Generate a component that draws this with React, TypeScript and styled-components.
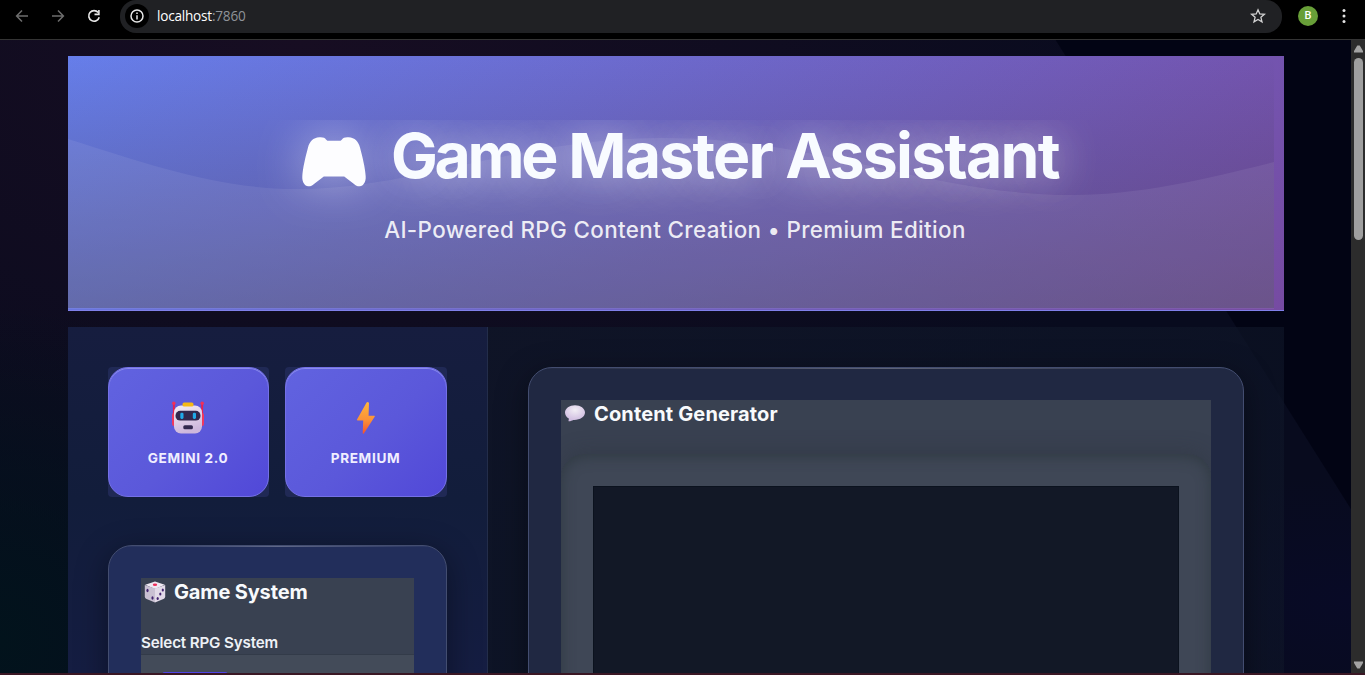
import React from "react";
import styled, { createGlobalStyle } from "styled-components";

const Global = createGlobalStyle`
  * { box-sizing: border-box; }
  html, body { margin: 0; padding: 0; background: #000; overflow: hidden; }
  body { font-family: Inter, "Liberation Sans", sans-serif; color: #f8fafc; }
  h1, h2, p { margin: 0; }
  svg { display: block; flex: none; }
`;

const Window = styled.div`
  width: 1365px;
  height: 675px;
  display: flex;
  flex-direction: column;
  overflow: hidden;
  border-bottom: 2px solid #3b1724;
`;

const Toolbar = styled.div`
  flex: none;
  height: 40px;
  display: flex;
  align-items: flex-start;
  background: #000;
  border-bottom: 1px solid #343434;
`;

const NavButtons = styled.div`
  width: 120px;
  height: 32px;
  padding-left: 14px;
  display: flex;
  align-items: center;
  gap: 20px;
`;

const AddressBar = styled.div`
  width: 1162px;
  height: 33px;
  padding: 0 16px 1px 5px;
  display: flex;
  align-items: center;
  background: #202124;
  border-radius: 16px;
`;

const InfoDot = styled.div`
  width: 24px;
  height: 24px;
  border-radius: 50%;
  background: #000;
  display: flex;
  align-items: center;
  justify-content: center;
`;

const Url = styled.div`
  flex: 1;
  margin-left: 8px;
  font: 13.6px/18px "Open Sans", "Noto Sans", sans-serif;
  letter-spacing: -0.22px;
  color: #fff;
  span { color: #8f9398; }
`;

const Avatar = styled.div`
  margin: 6px 0 0 16px;
  width: 20px;
  height: 20px;
  border-radius: 50%;
  background: #689f38;
  font: 500 11px/20px Roboto, sans-serif;
  text-align: center;
  color: #fff;
`;

const Kebab = styled.div`
  height: 32px;
  margin-left: 16px;
  width: 20px;
  display: flex;
  align-items: center;
  justify-content: center;
`;

const Viewport = styled.div`
  flex: 1;
  min-height: 0;
  display: flex;
`;

const Page = styled.main`
  width: 1351px;
  overflow: hidden;
  padding: 16px 67px 0 68px;
  display: flex;
  flex-direction: column;
  gap: 16px;
  background:
    linear-gradient(57.8deg, transparent 1230px, #020414 1231px),
    radial-gradient(circle at 0% 95%, #02131c 0, rgba(2, 19, 28, 0) 340px),
    radial-gradient(ellipse at 1351px 560px, #080a26 0, rgba(8, 10, 38, 0) 300px),
    radial-gradient(ellipse at 300px 0, #170d22 0, rgba(23, 13, 34, 0) 900px),
    #080b1e;
`;

const Scrollbar = styled.div`
  width: 14px;
  padding: 5px 2px 4px 3px;
  display: flex;
  flex-direction: column;
  justify-content: space-between;
  background: #2c2c2c;
`;

const ScrollTop = styled.div`
  display: flex;
  flex-direction: column;
  gap: 5px;
`;

const Thumb = styled.div`
  height: 182px;
  width: 9px;
  border-radius: 5px;
  background: #9f9f9f;
`;

const Hero = styled.header`
  position: relative;
  flex: none;
  height: 255px;
  padding-top: 64px;
  display: flex;
  flex-direction: column;
  align-items: center;
  background: linear-gradient(135deg, #667eea 0%, #764ba2 100%);
  border-bottom: 1px solid #8080ea;
`;

const HeroShade = styled.div`
  position: absolute;
  inset: 0 10px 2px 0;
  background: linear-gradient(180deg, rgba(65, 65, 85, 0) 0%, rgba(65, 65, 85, 0.42) 100%);
`;

const TitleRow = styled.div`
  position: relative;
  width: 960px;
  height: 90px;
  clip-path: inset(0 -80px -80px -80px);
`;

const Title = styled.h1`
  display: flex;
  align-items: flex-start;
  padding-left: 106px;
  font: 700 62.5px/70px Inter, sans-serif;
  letter-spacing: -1.75px;
  white-space: nowrap;
  color: #f8fbff;
  text-shadow: 0 0 40px rgba(255, 255, 255, 0.5), 0 4px 50px rgba(255, 255, 255, 0.2);
  svg {
    margin: 17px 25px 0 0;
    filter: drop-shadow(0 0 24px rgba(255, 255, 255, 0.5));
  }
`;

const TightWord = styled.span`
  letter-spacing: -3.3px;
`;

const Subtitle = styled.p`
  position: relative;
  left: -1px;
  margin-top: 4px;
  font-size: 22.4px;
  font-weight: 500;
  line-height: 32px;
  letter-spacing: 0.37px;
  white-space: nowrap;
  color: rgba(255, 255, 255, 0.88);
`;

const Columns = styled.div`
  flex: 1;
  min-height: 0;
  display: grid;
  grid-template-columns: 420px 1fr;
`;

const Sidebar = styled.aside`
  min-height: 0;
  padding: 40px;
  display: flex;
  flex-direction: column;
  gap: 48px;
  background: linear-gradient(180deg, #161d3f 0%, #121d3b 50%, #151d42 100%);
  border-right: 1px solid #232d4a;
`;

const MainPanel = styled.section`
  min-height: 0;
  padding: 40px;
  background: linear-gradient(90deg, rgba(15, 22, 40, 0.8), rgba(15, 22, 40, 0.65));
`;

const Badges = styled.div`
  display: grid;
  grid-template-columns: 161px 1fr;
  gap: 16px;
`;

const BadgeFrame = styled.div`
  height: 130px;
  border-radius: 4px;
  background: #202955;
`;

const Badge = styled.div`
  height: 130px;
  padding: 33px 1px 0 0;
  display: flex;
  flex-direction: column;
  align-items: center;
  gap: 13px;
  border: 1px solid #7470e6;
  border-radius: 20px;
  background: linear-gradient(135deg, #6163e0 0%, #5b58da 55%, #5148d8 100%);
  box-shadow: inset 0 1px 0 #8a8cec;
  font-size: 13.6px;
  font-weight: 700;
  line-height: 20px;
  letter-spacing: 0.65px;
  color: #f0eeff;
`;

const Card = styled.div<{ $tint: string }>`
  height: 420px;
  padding: 32px;
  border: 1px solid #434d70;
  border-radius: 24px;
  background:
    linear-gradient(90deg, transparent, rgba(255, 255, 255, 0.28), transparent) top / 100% 1px no-repeat,
    ${(p) => p.$tint};
  box-shadow: 0 8px 32px rgba(0, 0, 0, 0.4);
`;

const CardBody = styled.div`
  height: 400px;
  overflow: hidden;
  background: #394151;
`;

const CardTitle = styled.h2<{ $tracking: number }>`
  display: flex;
  align-items: center;
  gap: 8px;
  height: 28px;
  padding-left: 3px;
  font: 700 20px/28px Inter, sans-serif;
  letter-spacing: ${(p) => p.$tracking}px;
  white-space: nowrap;
  color: #f8fafc;
`;

const FieldLabel = styled.div`
  height: 48px;
  padding-top: 27px;
  font-size: 15.2px;
  font-weight: 600;
  line-height: 20px;
  letter-spacing: -0.16px;
  color: #eef1f6;
`;

const FieldBox = styled.div`
  height: 60px;
  padding: 17px 0 0 21px;
  border-top: 1px solid #333b49;
  background: #434b59;
`;

const FieldTab = styled.div`
  width: 66px;
  height: 20px;
  border-radius: 3px;
  background: #4f46e5;
`;

const ChatWell = styled.div`
  height: 300px;
  margin-top: 26px;
  padding: 32px;
  border-radius: 24px;
  background: #3f4756;
  box-shadow:
    inset 0 2px 14px rgba(45, 55, 62, 0.85),
    0 -2px 20px rgba(45, 50, 60, 0.4);
`;

const ChatLog = styled.div`
  height: 300px;
  background: #121826;
  border: 1px solid #0b121e;
`;

const Arrow = ({ back }: { back?: boolean }) => (
  <svg width="16" height="16" viewBox="0 0 16 16" fill="none" stroke="#6d6d6d" strokeWidth="1.5">
    <path d={back ? "M14 8H3M8 2.5 2.6 8 8 13.5" : "M2 8h11M8 2.5 13.4 8 8 13.5"} />
  </svg>
);

const Reload = () => (
  <svg width="16" height="16" viewBox="0 0 16 16" fill="none" stroke="#e8e8e8" strokeWidth="1.6">
    <path d="M12.2 4.600A5.300 5.300 0 1 0 13.200 9.200" />
    <path d="M12.900 2v4.400H8.500" />
  </svg>
);

const Info = () => (
  <svg width="14" height="14" viewBox="0 0 14 14" fill="none" stroke="#e8e8e8" strokeWidth="1.5">
    <circle cx="7" cy="7" r="6" />
    <path d="M7 6.200v4.200M7 3.500v1.600" />
  </svg>
);

const Star = () => (
  <svg width="16" height="16" viewBox="0 0 16 16" fill="none" stroke="#d4d4d4" strokeWidth="1.300">
    <path d="M8 1.800l1.800 4.100 4.600.4-3.500 3 1.100 4.500L8 11.400l-4 2.400 1.100-4.500-3.500-3 4.600-.4z" />
  </svg>
);

const Gamepad = () => (
  <svg width="64" height="50" viewBox="0 0 64 50" fill="#fdfdff">
    <path d="M24 2.600C23 .8 21 .1 17.500 .3C11 .6 7.600 4.600 6 10.500C3.500 20 .8 31 .3 39.500C0 45 2.700 49 6.200 49.300C8.500 49.500 10.300 48.400 12 47L21.800 39.600H42.200L52 47C53.700 48.400 55.500 49.500 57.800 49.300C61.300 49 64 45 63.700 39.500C63.200 31 60.500 20 58 10.500C56.400 4.600 53 .6 46.500 .3C43 .1 41 .8 40 2.600L38.600 3.800H25.400Z" />
  </svg>
);

const Wave = () => (
  <svg width="1206" height="253" viewBox="0 0 1206 253" fill="rgba(255,255,255,0.07)">
    <path d="M0 83C80 108 150 133 228 133C345 133 450 83 590 82C745 80 860 139 1004 139C1072 139 1138 123 1206 106V253H0Z" />
  </svg>
);

const Robot = () => (
  <svg width="34" height="34" viewBox="0 0 34 34">
    <defs>
      <linearGradient id="robotFace" x1="0" y1="0" x2="0.3" y2="1">
        <stop offset="0" stopColor="#f4ecf4" />
        <stop offset="1" stopColor="#cdb7dc" />
      </linearGradient>
    </defs>
    <rect x="1.900" y="2" width="1.900" height="14" rx=".8" fill="#e8204f" />
    <rect x="30.200" y="2" width="1.900" height="14" rx=".8" fill="#e8204f" />
    <circle cx="2.800" cy="2.200" r="1.700" fill="#f0305a" />
    <circle cx="31.200" cy="2.200" r="1.700" fill="#f0305a" />
    <rect x="1" y="12" width="4" height="13" rx="2" fill="#f0385f" />
    <rect x="29" y="12" width="4" height="13" rx="2" fill="#f0385f" />
    <rect x="3" y="4.500" width="28" height="28" rx="7" fill="url(#robotFace)" />
    <rect x="11.500" y="1.600" width="11" height="4" rx="1.700" fill="#f5b914" />
    <rect x="4.500" y="9.800" width="25" height="9.800" rx="4.700" fill="#32284e" />
    <rect x="9.300" y="11.700" width="3.200" height="6.200" rx="1.300" fill="#20a9e8" />
    <rect x="21.800" y="11.700" width="3.200" height="6.200" rx="1.300" fill="#20a9e8" />
    <rect x="12.300" y="24.300" width="9.600" height="3.900" rx="1.500" fill="#32284e" />
  </svg>
);

const Bolt = () => (
  <svg width="34" height="34" viewBox="0 0 34 34">
    <defs>
      <linearGradient id="boltFill" x1="0" y1="0" x2="0" y2="1">
        <stop offset="0" stopColor="#ffb63b" />
        <stop offset=".55" stopColor="#fb9238" />
        <stop offset="1" stopColor="#f4522e" />
      </linearGradient>
    </defs>
    <path d="M17.600 1.500 8 18.600Q7.700 19.400 8.500 19.400H14.200L13.700 32Q14 33.400 15 32.200L25.800 15.600Q26.200 14.700 25.300 14.700H19.600L20 2Q19 .4 17.600 1.500Z" fill="url(#boltFill)" />
  </svg>
);

const Die = () => (
  <svg width="22" height="22" viewBox="0 0 22 22">
    <path d="M11 .4 20.800 3.800 11 8 1.200 3.800Z" fill="#f0e9f3" />
    <path d="M.8 4 11 7.600V21.600L2 17.800Q.8 17 .8 15.500Z" fill="#c9c0d2" />
    <path d="M21.200 4 11 7.600V21.600L20 17.800Q21.200 17 21.200 15.500Z" fill="#e2dae8" />
    <ellipse cx="11" cy="3.800" rx="2.200" ry="1.200" fill="#ee2f5b" />
    <g fill="#43246f">
      <ellipse cx="3.500" cy="9.500" rx="1.100" ry="1.700" />
      <ellipse cx="8.500" cy="17" rx="1.100" ry="1.700" />
      <ellipse cx="18.800" cy="9" rx="1.100" ry="1.600" />
      <ellipse cx="16.300" cy="13" rx="1.100" ry="1.600" />
      <ellipse cx="13.700" cy="17.500" rx="1.100" ry="1.600" />
    </g>
  </svg>
);

const Bubble = () => (
  <svg width="22" height="22" viewBox="0 0 22 22">
    <defs>
      <radialGradient id="bubbleFill" cx=".5" cy=".3" r=".7">
        <stop offset="0" stopColor="#f2eef5" />
        <stop offset="1" stopColor="#cdb9df" />
      </radialGradient>
    </defs>
    <path d="M11 2.200C5.500 2.200 1 5.300 1 9.600C1 12.200 2.500 14.400 4.800 15.600C5 16.700 4.300 17.600 4.600 18.200C6.500 18.300 8 17.500 9.200 16.900C15.500 17.300 21 14.200 21 9.600C21 5.300 16.500 2.200 11 2.200Z" fill="url(#bubbleFill)" />
  </svg>
);

const Triangle = ({ down }: { down?: boolean }) => (
  <svg width="9" height="8" viewBox="0 0 9 8" fill="#a3a3a3">
    <path d={down ? "M0 .5H9V2L5.700 7.500H3.300L0 2Z" : "M0 7.500H9V6L5.700.5H3.300L0 6Z"} />
  </svg>
);

export default function App() {
  return (
    <Window>
      <Global />
      <Toolbar>
        <NavButtons>
          <Arrow back />
          <Arrow />
          <Reload />
        </NavButtons>
        <AddressBar>
          <InfoDot><Info /></InfoDot>
          <Url>localhost<span>:7860</span></Url>
          <Star />
        </AddressBar>
        <Avatar>B</Avatar>
        <Kebab>
          <svg width="4" height="16" viewBox="0 0 4 16" fill="#e3e3e3">
            <circle cx="2" cy="2.500" r="1.500" />
            <circle cx="2" cy="8" r="1.500" />
            <circle cx="2" cy="13.500" r="1.500" />
          </svg>
        </Kebab>
      </Toolbar>
      <Viewport>
        <Page>
          <Hero>
            <HeroShade><Wave /></HeroShade>
            <TitleRow>
              <Title>
                <Gamepad />
                <div><TightWord>Game</TightWord> Master Assistant</div>
              </Title>
            </TitleRow>
            <Subtitle>AI-Powered RPG Content Creation • Premium Edition</Subtitle>
          </Hero>
          <Columns>
            <Sidebar>
              <Badges>
                <BadgeFrame><Badge><Robot />GEMINI 2.0</Badge></BadgeFrame>
                <BadgeFrame><Badge><Bolt />PREMIUM</Badge></BadgeFrame>
              </Badges>
              <Card $tint="#222e5b">
                <CardBody>
                  <CardTitle $tracking={-0.15}><Die />Game System</CardTitle>
                  <FieldLabel>Select RPG System</FieldLabel>
                  <FieldBox><FieldTab /></FieldBox>
                </CardBody>
              </Card>
            </Sidebar>
            <MainPanel>
              <Card $tint="#202842">
                <CardBody>
                  <CardTitle $tracking={0.14}><Bubble />Content Generator</CardTitle>
                  <ChatWell><ChatLog /></ChatWell>
                </CardBody>
              </Card>
            </MainPanel>
          </Columns>
        </Page>
        <Scrollbar>
          <ScrollTop>
            <Triangle />
            <Thumb />
          </ScrollTop>
          <Triangle down />
        </Scrollbar>
      </Viewport>
    </Window>
  );
}
